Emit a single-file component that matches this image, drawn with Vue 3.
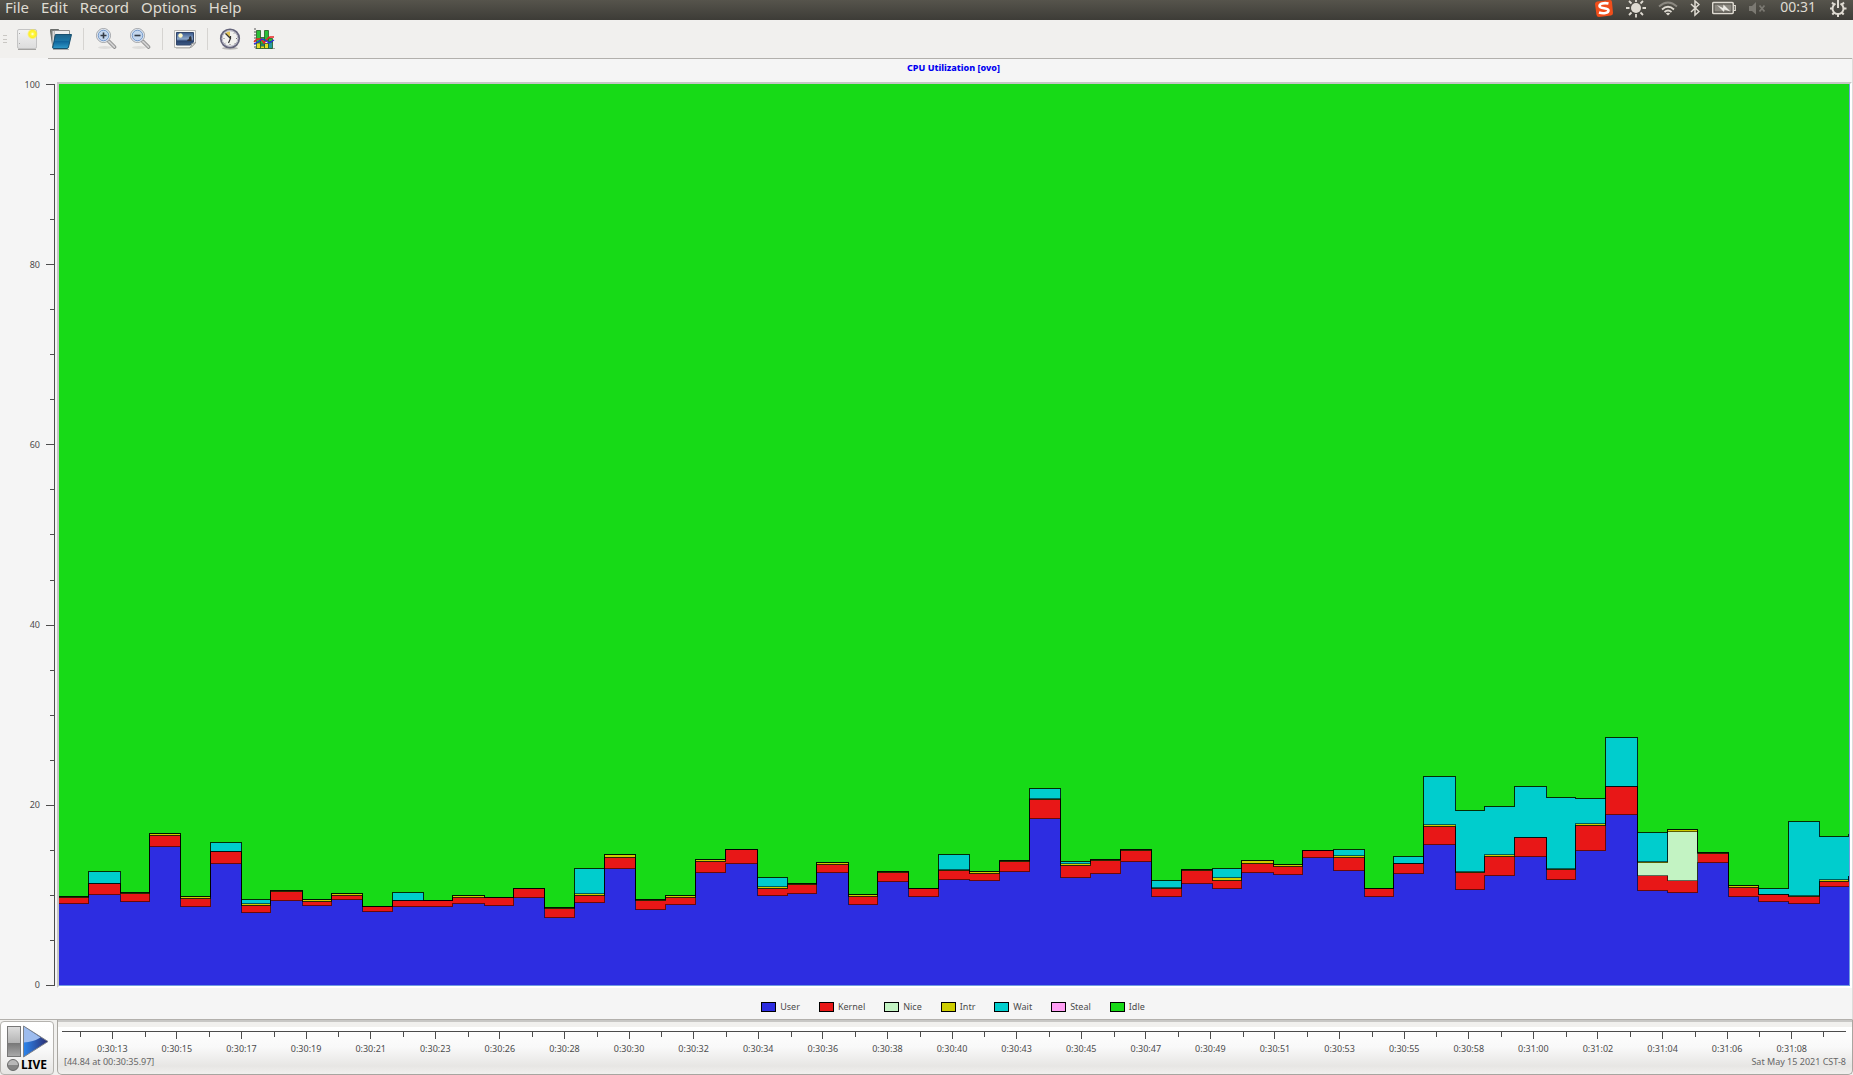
<script setup>
const menus = ['File', 'Edit', 'Record', 'Options', 'Help']

const legend = [
  { name: 'User', color: '#2d2de1' },
  { name: 'Kernel', color: '#e81717' },
  { name: 'Nice', color: '#c3f3c3' },
  { name: 'Intr', color: '#cdcd00' },
  { name: 'Wait', color: '#00cdcd' },
  { name: 'Steal', color: '#ff9ff5' },
  { name: 'Idle', color: '#17da17' },
]

const percentTicks = Array.from({ length: 21 }, (_, i) => 100 - i * 5)

const times = [
  '0:30:13', '0:30:15', '0:30:17', '0:30:19', '0:30:21', '0:30:23', '0:30:26', '0:30:28', '0:30:30',
  '0:30:32', '0:30:34', '0:30:36', '0:30:38', '0:30:40', '0:30:43', '0:30:45', '0:30:47', '0:30:49',
  '0:30:51', '0:30:53', '0:30:55', '0:30:58', '0:31:00', '0:31:02', '0:31:04', '0:31:06', '0:31:08',
]

// Samples: start, then the stacked tops for user, kernel, nice, intr and wait.
const ORIGIN_X = 59
const ORIGIN_Y = 84
const WIDTH = 1790
const HEIGHT = 901
const samples = [
  [58, 903, 897, 897, 896, 896], [88, 894, 883, 883, 883, 871], [120, 901, 893, 893, 892, 892],
  [149, 846, 835, 835, 833, 833], [180, 906, 898, 898, 896, 896], [210, 863, 851, 851, 851, 842],
  [241, 912, 905, 905, 903, 899], [270, 900, 891, 891, 890, 890], [302, 905, 901, 901, 899, 899],
  [331, 899, 895, 895, 893, 893], [362, 911, 906, 906, 906, 906], [392, 906, 900, 900, 900, 892],
  [423, 906, 900, 900, 900, 900], [452, 903, 897, 897, 895, 895], [484, 905, 897, 897, 897, 897],
  [513, 897, 888, 888, 888, 888], [544, 917, 908, 908, 907, 907], [574, 902, 895, 895, 893, 868],
  [604, 868, 857, 857, 854, 854], [635, 909, 900, 900, 899, 899], [665, 904, 897, 897, 895, 895],
  [695, 872, 861, 861, 859, 859], [725, 863, 849, 849, 849, 849], [757, 895, 888, 888, 886, 877],
  [787, 893, 884, 884, 883, 883], [816, 872, 864, 864, 862, 862], [848, 904, 896, 896, 894, 894],
  [877, 881, 872, 872, 871, 871], [908, 896, 888, 888, 888, 888], [938, 879, 870, 870, 869, 854],
  [969, 880, 873, 873, 871, 871], [999, 871, 861, 861, 860, 860], [1029, 818, 799, 799, 798, 788],
  [1060, 877, 865, 865, 863, 861], [1090, 873, 860, 860, 859, 859], [1120, 861, 850, 850, 849, 849],
  [1151, 896, 888, 888, 887, 880], [1181, 883, 870, 870, 869, 869], [1212, 888, 880, 880, 877, 868],
  [1241, 872, 863, 863, 860, 860], [1273, 874, 866, 866, 864, 864], [1302, 857, 850, 850, 850, 850],
  [1333, 870, 857, 857, 855, 849], [1364, 896, 888, 888, 888, 888], [1393, 873, 863, 863, 863, 856],
  [1423, 844, 826, 826, 824, 776], [1455, 889, 872, 872, 871, 810], [1484, 875, 856, 856, 854, 806],
  [1514, 856, 837, 837, 837, 786], [1546, 879, 869, 869, 868, 797], [1575, 850, 825, 825, 823, 798],
  [1605, 814, 786, 786, 786, 737], [1637, 890, 875, 862, 861, 832], [1667, 892, 880, 831, 829, 829],
  [1697, 862, 853, 853, 852, 852], [1728, 896, 887, 887, 885, 885], [1758, 901, 894, 894, 894, 888],
  [1788, 903, 896, 896, 895, 821], [1819, 886, 881, 881, 879, 836], [1848, 886, 876, 876, 876, 834],
]

function stepLine(column) {
  let d = ''
  samples.forEach((s, i) => {
    const x = s[0] - ORIGIN_X + 0.5
    const y = s[column] - ORIGIN_Y + 0.5
    d += i === 0 ? `M${x} ${y}` : `H${x}V${y}`
  })
  return d + `H${WIDTH + 1}`
}

const layers = [5, 4, 3, 2, 1].map((column) => {
  const line = stepLine(column)
  return { color: legend[column - 1].color, line, area: `${line}V${HEIGHT + 2}H-1Z` }
})
// Steal is empty, so its outline repeats that of Wait.
const outlines = [stepLine(5), ...layers.map((l) => l.line)]
</script>

<template>
  <div class="window">
    <header class="menubar">
      <nav class="menus">
        <button v-for="m in menus" :key="m" type="button" class="menu">{{ m }}</button>
      </nav>
      <div class="tray">
        <svg width="20" height="18" viewBox="0 0 20 18">
          <path d="M3 1.500 16 0q2 0 2 2l1 11q0 2-2 2.500L5 17q-2 0-2.500-2L1 4q0-2 2-2.500z" fill="#f04e1b" />
          <path d="M14.500 3.500C10 2.500 5.500 3.500 5.500 6c0 3 9 1.500 9 4.500 0 2.500-5 3.500-9.500 2" fill="none" stroke="#fff" stroke-width="2.600" />
        </svg>
        <svg width="20" height="18" viewBox="0 0 20 18">
          <circle cx="10" cy="8" r="5" fill="#dfdbd2" />
          <path d="M10-1v3M10 14v3.500M0 8h3.500M16.500 8H20M3 1l2.500 2.500M14.500 12.500 17 15M3 15l2.500-2.500M14.500 3.500 17 1" stroke="#dfdbd2" stroke-width="1.800" />
        </svg>
        <svg width="20" height="18" viewBox="0 0 20 18" fill="none" stroke-width="1.800">
          <path d="M1 6.500Q10-1.500 19 6.500" stroke="#8b8880" />
          <path d="M4 9.500Q10 4 16 9.500" stroke="#dfdbd2" />
          <path d="M6.500 12Q10 9 13.500 12" stroke="#dfdbd2" />
          <path d="m7.800 13.500 2.200 2 2.200-2Q10 12 7.800 13.500z" fill="#dfdbd2" stroke="none" />
        </svg>
        <svg width="10" height="18" viewBox="1 0 10 18" fill="none" stroke="#dfdbd2" stroke-width="1.500">
          <path d="m2 4 8 7.500L6 15V1l4 3.500L2 12" />
        </svg>
        <svg width="24" height="18" viewBox="1 0 24 18">
          <rect x="1.700" y="2.500" width="20.500" height="11" rx="1" fill="none" stroke="#dfdbd2" stroke-width="1.500" />
          <rect x="3.500" y="4.500" width="17" height="7" fill="#8b8880" />
          <path d="M22.500 5.500h1.800v5h-1.800" fill="none" stroke="#dfdbd2" stroke-width="1.200" />
          <path d="m6 5 6 3 .5-3.500 7 7-6-2-.5 2.500z" fill="#eceae4" />
        </svg>
        <svg width="18" height="18" viewBox="0 0 18 18">
          <path d="M1 6h3l4-4v12.500L4 11H1z" fill="#7b7972" />
          <path d="m11.500 5.500 5 6m0-6-5 6" stroke="#7b7972" stroke-width="1.800" />
        </svg>
        <time class="clock">00:31</time>
        <svg width="20" height="18" viewBox="0 0 20 18" fill="none" stroke="#dfdbd2" stroke-width="2">
          <path d="M7.500 3.700a5.500 5.500 0 1 0 5 0M10 0v8" />
          <path d="M2 8.500h3M15 8.500h3.500M4 2.500 6.500 5M13.500 5 16 2.500M4.300 14.500l2-2M13.700 12.500l2 2M10 14v3" />
        </svg>
      </div>
    </header>

    <div class="toolbar">
      <svg class="grip" width="5" height="9" viewBox="0 0 5 9"><path d="M0 .5h4M0 4.500h4M0 7.500h4" stroke="#c9c7c3" /></svg>
      <div class="group">
        <button type="button" class="tool" aria-label="New">
          <svg width="22" height="22" viewBox="0 0 22 22">
            <defs>
              <linearGradient id="paper" x1="0" y1="0" x2="0" y2="1"><stop offset="0" stop-color="#f3f3f3" /><stop offset="1" stop-color="#dcdcdc" /></linearGradient>
              <radialGradient id="glow"><stop offset="0" stop-color="#fff" /><stop offset=".3" stop-color="#fff84a" /><stop offset=".65" stop-color="#ffef20" /><stop offset="1" stop-color="#fff04000" /></radialGradient>
            </defs>
            <path d="M2 21.500h18" stroke="#a4a3a1" />
            <rect x="1.500" y="1.500" width="19" height="19" rx="1.500" fill="url(#paper)" stroke="#c4c4c4" />
            <path d="M3.500 5v1M3.500 15v1" stroke="#aaa" />
            <circle cx="16.500" cy="6" r="5.500" fill="url(#glow)" />
          </svg>
        </button>
        <button type="button" class="tool" aria-label="Open">
          <svg width="22" height="22" viewBox="0 0 22 22">
            <defs><linearGradient id="folder" x1="0" y1="0" x2="0" y2="1"><stop offset="0" stop-color="#1d6288" /><stop offset=".45" stop-color="#1b75a5" /><stop offset=".5" stop-color="#0f659c" /><stop offset="1" stop-color="#2f9ac9" /></linearGradient></defs>
            <path d="M3 21.500h16" stroke="#aaa" />
            <path d="M.5 3V1.500h8L9.500 3v17H3z" fill="#7b7e7c" stroke="#6a6d6b" />
            <path d="M4 2.500h15.500V8H4z" fill="#ededed" stroke="#8c8c8c" />
            <path d="M2.500 3v15l1.500 1.500V3z" fill="#d9d9d9" />
            <path d="M5.500 6.500h16L18.500 19q-.4 1.500-1.500 1.500H3.500q-1 0-.7-1.500z" fill="url(#folder)" stroke="#17506f" />
          </svg>
        </button>
      </div>
      <i class="sep"></i>
      <div class="group">
        <button v-for="z in ['in', 'out']" :key="z" type="button" class="tool" :aria-label="'Zoom ' + z">
          <svg width="22" height="22" viewBox="0 0 22 22">
            <ellipse cx="10" cy="19.500" rx="7" ry="1.500" fill="#dedddb" />
            <path d="m14 13.500 5.500 5.500" stroke="#858585" stroke-width="3.600" stroke-linecap="round" />
            <path d="m14 13.500 5.500 5.500" stroke="#d0d0d0" stroke-width="2" stroke-linecap="round" />
            <circle cx="8.500" cy="7.500" r="7" fill="#c3d6ed" stroke="#a3a4a6" />
            <circle cx="8.500" cy="7.500" r="6" fill="none" stroke="#f0f0f0" />
            <circle cx="8.500" cy="7.500" r="5.300" fill="none" stroke="#6f97cb" />
            <path :d="z === 'in' ? 'M5.500 7.500h6M8.500 4.500v6' : 'M5.500 7.500h6'" stroke="#333a44" stroke-width="1.600" />
          </svg>
        </button>
      </div>
      <i class="sep"></i>
      <button type="button" class="tool" aria-label="Export image">
        <svg width="22" height="22" viewBox="0 0 22 22">
          <defs><linearGradient id="sky" x1="0" y1="0" x2="0" y2="1"><stop offset="0" stop-color="#35568b" /><stop offset=".5" stop-color="#8ba6c8" /><stop offset=".62" stop-color="#5d7ba3" /><stop offset=".66" stop-color="#27406a" /><stop offset="1" stop-color="#3c5a86" /></linearGradient></defs>
          <path d="M2 20.500h14" stroke="#cfcecb" />
          <path d="M.5 2.500h21v13l-4 4H.5z" fill="#f7f7f5" stroke="#b9b8b5" />
          <path d="M2.500 4.500h17V14l-3 3h-14z" fill="url(#sky)" stroke="#33466a" />
          <circle cx="6.500" cy="7.500" r="2.200" fill="#fff9c8" />
          <path d="m13 13 1-2 1 .5q-.5-3 1.500-3.500 1.500 1 1 5z" fill="#30343c" />
          <path d="M16 19.500q2-1 1.500-4 2 .5 4-1z" fill="#f4f4f4" stroke="#777" stroke-width=".6" />
        </svg>
      </button>
      <i class="sep"></i>
      <div class="group">
        <button type="button" class="tool" aria-label="Time">
          <svg width="22" height="22" viewBox="0 0 22 22">
            <ellipse cx="11" cy="20.300" rx="8" ry="1.500" fill="#b9b8b6" />
            <circle cx="11" cy="10.500" r="9.200" fill="#f2f2ee" stroke="#66667c" stroke-width="1.800" />
            <circle cx="11" cy="10.500" r="7.800" fill="none" stroke="#b5b5c4" />
            <path d="M11 10.500 6 5.500q2-2 5-2z" fill="#e2c65b" />
            <path d="m6.500 5.500 5 5L9.500 15M11.500 8v3" fill="none" stroke="#333" stroke-width="1.200" />
            <path d="M11 16v1M17 10.500h1M4.500 10.500h1M15 5.500l.7-.7M15.500 15l.7.7M6 15.500l.7-.7" stroke="#777" />
          </svg>
        </button>
        <button type="button" class="tool" aria-label="Chart">
          <svg width="22" height="22" viewBox="0 0 22 22">
            <path d="M2 0v20.500h19.500" fill="none" stroke="#555" stroke-dasharray="2 1" />
            <g stroke="#245c24" stroke-width=".8">
              <path d="M3.500 2.500h4v13h-4zM11.500 2.500h4v10h-4z" fill="#29c037" />
              <path d="M7.500 9.500h4V17h-4zM15.500 10.500h4V14h-4z" fill="#29c037" />
              <path d="M3.500 15h4v5.500h-4zM11.500 15.500h4v5h-4z" fill="#e3dc28" />
              <path d="M7.500 16h4v2.500h-4zM15.500 14h4v6.500h-4z" fill="#269aa0" />
              <path d="M7.500 18h4v2.500h-4z" fill="#e3dc28" />
            </g>
            <path d="m1 14 3-3h4l3 4 4-5 2-1h4" fill="none" stroke="#e92424" stroke-width="1.500" />
            <path d="m1 16 4-2 4-3 3 1 4 3 5-3" fill="none" stroke="#2929e6" stroke-width="1.300" />
          </svg>
        </button>
      </div>
    </div>

    <main class="panel">
      <h1 class="title">CPU Utilization [ovo]</h1>
      <div class="plot-row">
        <div class="scale">
          <div v-for="p in percentTicks" :key="p" class="scale-row">
            <span v-if="p % 20 === 0" class="scale-label">{{ p }}</span>
            <i class="mark" :class="{ major: p % 20 === 0 }"></i>
          </div>
        </div>
        <div class="canvas">
          <svg class="chart" :viewBox="`0 0 ${WIDTH} ${HEIGHT}`" preserveAspectRatio="none" shape-rendering="crispEdges">
            <path v-for="l in layers" :key="l.color" :d="l.area" :fill="l.color" />
            <path v-for="(d, i) in outlines" :key="i" :d="d" class="outline" />
          </svg>
        </div>
      </div>
      <ul class="legend">
        <li v-for="s in legend" :key="s.name"><i class="swatch" :style="{ background: s.color }"></i>{{ s.name }}</li>
      </ul>
    </main>

    <footer class="bottom">
      <button type="button" class="live">
        <svg class="play" width="43" height="33" viewBox="0 0 43 33">
          <defs>
            <linearGradient id="bar" x1="0" y1="0" x2="0" y2="1"><stop offset="0" stop-color="#dedede" /><stop offset=".54" stop-color="#b5b5b5" /><stop offset=".55" stop-color="#777" /><stop offset="1" stop-color="#aaa" /></linearGradient>
            <linearGradient id="low" x1="0" y1="0" x2="1" y2="0"><stop offset="0" stop-color="#2c86ee" /><stop offset="1" stop-color="#2b2c70" /></linearGradient>
          </defs>
          <rect x="1.500" y="1.500" width="13" height="30" fill="url(#bar)" stroke="#777" />
          <path d="M17.500 1v31L42 16.500z" fill="url(#low)" />
          <path d="M17.500 1v16.500q10-.5 17-5z" fill="#9dbcee" />
          <path d="M17.500 1v31L42 16.500z" fill="none" stroke="#7d8188" />
        </svg>
        <span class="live-row"><i class="lamp"></i>LIVE</span>
      </button>
      <section class="timeline">
        <div class="ruler">
          <div v-for="t in times" :key="t" class="slot"><i class="tick"></i>{{ t }}</div>
        </div>
        <div class="status">
          <span>[44.84 at 00:30:35.97]</span>
          <span>Sat May 15 2021 CST-8</span>
        </div>
      </section>
    </footer>
  </div>
</template>

<style>
body {
  margin: 0;
}
</style>

<style scoped>
.window {
  display: flex;
  flex-direction: column;
  min-height: 100vh;
  background: #f1f0ee;
  color: #4c4c4c;
  font: 9px/12px "Noto Sans", "Open Sans", sans-serif;
}
button {
  padding: 0;
  border: 0;
  background: none;
  color: inherit;
  font: inherit;
}
svg {
  display: block;
}
.menubar {
  display: flex;
  justify-content: space-between;
  height: 20px;
  background: linear-gradient(#56544c, #3d3c37);
  color: #dfdbd2;
  font: 15px/14px "Noto Sans", "Open Sans", sans-serif;
}
.menus {
  display: flex;
  gap: 12px;
  padding-left: 5px;
}
.menu {
  height: 14px;
}
.tray {
  display: flex;
  gap: 12px;
  padding-right: 5px;
}
.clock {
  margin-left: 2px;
  font-size: 14px;
}
.toolbar {
  display: flex;
  align-items: center;
  height: 38px;
}
.grip {
  margin: 0 8px 0 3px;
}
.group {
  display: flex;
  gap: 12px;
}
.tool {
  width: 22px;
  height: 22px;
}
.sep {
  width: 1px;
  height: 22px;
  margin: 0 11px;
  background: #d6d4d1;
}
.panel {
  display: flex;
  flex: 1;
  flex-direction: column;
  padding-top: 1px;
  border-right: 1px solid #dddcda;
  border-bottom: 1px solid #b2b0ac;
  background: linear-gradient(#b2b0ac, #b2b0ac) 48px 0 / 100% 1px no-repeat #f5f5f5;
}
.title {
  margin: 0;
  padding: 3px 0 8px 55px;
  color: #0000f0;
  font-size: 9px;
  font-weight: 800;
  line-height: 12px;
  text-align: center;
}
.plot-row {
  display: flex;
  flex: 1;
}
.scale {
  display: flex;
  flex-direction: column;
  justify-content: space-between;
  width: 54px;
  margin: 2px 2px 2px 0;
  border-right: 1px solid #4c4c4c;
}
.scale-row {
  display: flex;
  align-items: center;
  justify-content: flex-end;
  gap: 6px;
  height: 1px;
}
.mark {
  width: 4px;
  height: 1px;
  background: #4c4c4c;
}
.mark.major {
  width: 8px;
}
.canvas {
  position: relative;
  flex: 1;
  box-sizing: border-box;
  border-top: 2px solid #c6c6c6;
  border-left: 2px solid #c6c6c6;
  border-right: 2px solid #fff;
  border-bottom: 2px solid #fff;
  background: #6f9be0;
}
.chart {
  position: absolute;
  inset: 0;
  width: calc(100% - 1px);
  height: calc(100% - 1px);
  background: #17da17;
}
.outline {
  fill: none;
  stroke: #000;
  stroke-opacity: 0.55;
  stroke-width: 1px;
  vector-effect: non-scaling-stroke;
}
.legend {
  display: flex;
  justify-content: center;
  gap: 19px;
  margin: 0;
  padding: 13px 0 6px 54px;
  list-style: none;
}
.legend li {
  display: flex;
  align-items: center;
  gap: 4px;
}
.swatch {
  box-sizing: border-box;
  width: 15px;
  height: 10px;
  border: 1px solid #000;
}
.bottom {
  display: flex;
  gap: 3px;
  height: 55px;
}
.live {
  display: flex;
  box-sizing: border-box;
  flex-direction: column;
  align-items: center;
  width: 54px;
  margin-top: 1px;
  padding-top: 3px;
  border: 1px solid #b4b2ae;
  border-radius: 4px;
  background: linear-gradient(#fff, #fafafa 50%, #e6e5e3);
}
.live-row {
  display: flex;
  align-items: center;
  gap: 2px;
  color: #000;
  font-size: 12px;
  font-weight: 700;
  line-height: 14px;
}
.lamp {
  box-sizing: border-box;
  width: 12px;
  height: 12px;
  border: 1px solid #666;
  border-radius: 50%;
  background: linear-gradient(#b8b8b8 50%, #858585 50%);
}
.timeline {
  display: flex;
  box-sizing: border-box;
  flex: 1;
  flex-direction: column;
  padding: 11px 6px 0 4px;
  border: solid #a8a6a1;
  border-width: 0 1px 1px;
  border-radius: 0 0 5px 5px;
  background: linear-gradient(#c8c7c5 2px, #f1f0ee 2px, #f1f0ee 7px, #fff 7px, #f9f9f9 27px, #e7e6e4 46px, #f1f0ee);
}
.ruler {
  display: flex;
  padding: 0 22px 0 18px;
  border-top: 1px solid #4c4c4c;
}
.slot {
  display: flex;
  flex: 1;
  flex-direction: column;
  align-items: center;
  height: 24px;
  background: linear-gradient(#4c4c4c, #4c4c4c) 0 0 / 1px 5px no-repeat;
}
.slot:last-child {
  background: linear-gradient(#4c4c4c, #4c4c4c) 0 0 / 1px 5px no-repeat, linear-gradient(#4c4c4c, #4c4c4c) 100% 0 / 1px 5px no-repeat;
}
.tick {
  width: 1px;
  height: 7px;
  margin-bottom: 4px;
  background: #4c4c4c;
}
.status {
  display: flex;
  justify-content: space-between;
  padding-left: 2px;
  color: #666;
}
</style>
